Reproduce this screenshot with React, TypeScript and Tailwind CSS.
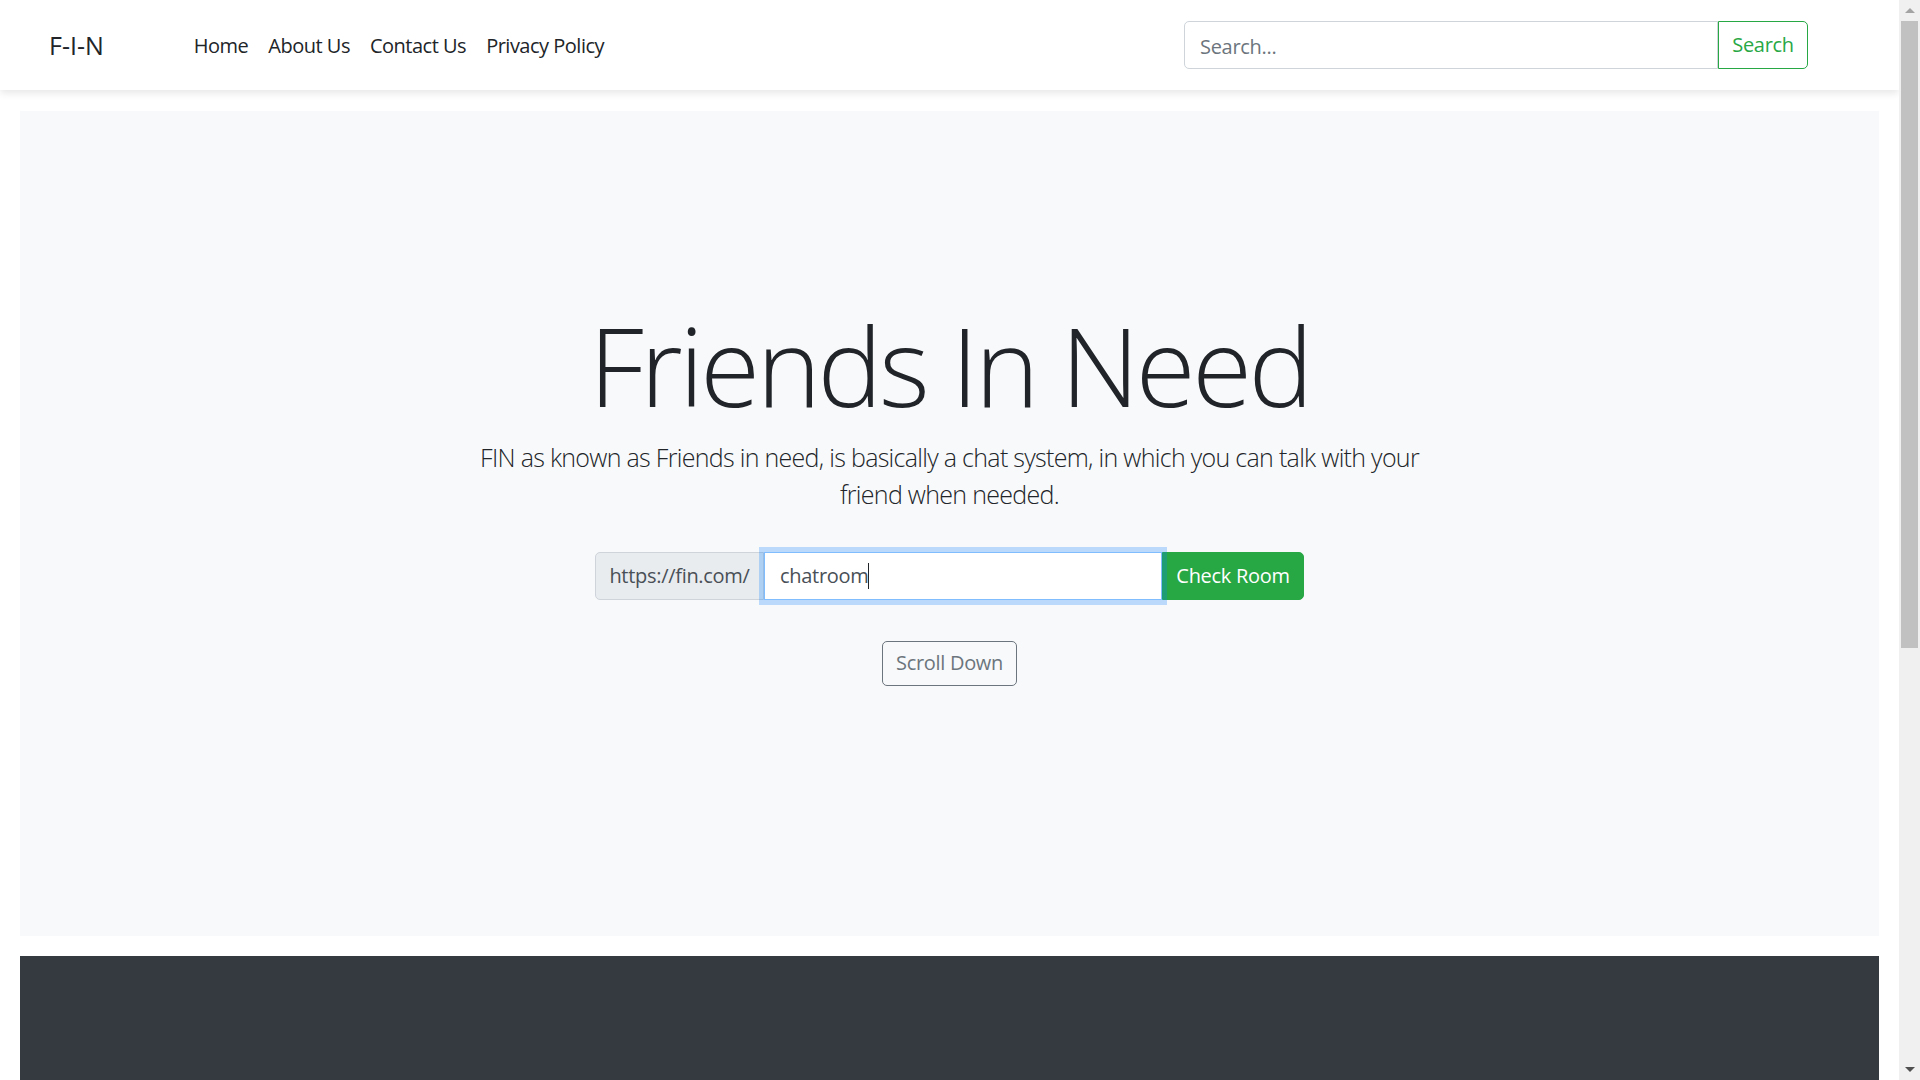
import React from "react";

const font = { fontFamily: '"Open Sans", "Noto Sans", sans-serif' };

const navLinks = ["Home", "About Us", "Contact Us", "Privacy Policy"];

const Navbar = () => (
  <nav className="relative z-10 h-[90px] flex items-center bg-white shadow-[0_3px_8px_rgba(0,0,0,0.1)] pl-[49px] pr-[91px]">
    <a className="text-[25px] text-[#212529] mr-[80px] pt-[2px]">F-I-N</a>
    <ul className="flex items-center pt-[2px]">
      {navLinks.map((l) => (
        <li key={l}>
          <a className="block px-[10px] text-[20px] tracking-[-0.5px] text-[#212529]">{l}</a>
        </li>
      ))}
    </ul>
    <form className="ml-auto flex h-[48px]">
      <input
        placeholder="Search..."
        className="w-[534px] h-full border border-[#ced4da] rounded-l-[5px] px-[15px] pt-[2px] text-[20px] tracking-[-0.3px] text-[#495057] placeholder:text-[#6c757d] outline-none bg-white"
      />
      <button
        type="button"
        className="w-[90px] h-full border border-[#28a745] rounded-r-[5px] text-[20px] tracking-[-0.3px] text-[#28a745] bg-white"
      >
        Search
      </button>
    </form>
  </nav>
);

const Hero = () => (
  <section className="mx-[20px] mt-[21px] h-[825px] bg-[#f8f9fa] flex flex-col items-center pt-[189px]">
    <h1 className="text-[109px] leading-[1.2] font-light text-[#212529] tracking-[-3.5px] mb-[8px]">
      Friends In Need
    </h1>
    <p className="text-[25px] leading-[1.5] font-light text-[#212529] text-center tracking-[-0.7px]">
      FIN as known as Friends in need, is basically a chat system, in which you can talk with your
      <br />
      friend when needed.
    </p>
    <div className="mt-[38px] flex h-[48px] text-[20px] tracking-[-0.3px]">
      <span className="w-[169px] flex items-center justify-center bg-[#e9ecef] border border-[#ced4da] rounded-l-[5px] text-[#495057]">
        https://fin.com/
      </span>
      <div className="w-[398px] h-full flex items-center bg-white border border-[#80bdff] px-[15px] text-[#495057] shadow-[0_0_0_5px_rgba(0,123,255,0.25)] relative z-10">
        chatroom
        <span className="inline-block w-px h-[26px] bg-[#212529]" />
      </div>
      <button
        type="button"
        className="w-[142px] bg-[#28a745] text-white rounded-r-[5px] border border-[#28a745]"
      >
        Check Room
      </button>
    </div>
    <button
      type="button"
      className="mt-[41px] w-[135px] h-[45px] border border-[#6c757d] rounded-[5px] text-[20px] tracking-[-0.3px] text-[#6c757d]"
    >
      Scroll Down
    </button>
  </section>
);

const Scrollbar = () => (
  <aside className="w-[21px] h-full bg-[#f0f0f0] flex flex-col items-center">
    <div className="h-[21px] flex items-center justify-center">
      <div className="w-0 h-0 border-l-[5px] border-r-[5px] border-b-[5px] border-l-transparent border-r-transparent border-b-[#a3a3a3]" />
    </div>
    <div className="w-[17px] h-[627px] bg-[#c1c1c1]" />
    <div className="flex-1" />
    <div className="h-[21px] flex items-center justify-center">
      <div className="w-0 h-0 border-l-[5px] border-r-[5px] border-t-[5px] border-l-transparent border-r-transparent border-t-[#505050]" />
    </div>
  </aside>
);

export default function App() {
  return (
    <div className="h-screen w-full flex overflow-hidden bg-white" style={font}>
      <main className="flex-1 h-full overflow-hidden">
        <Navbar />
        <Hero />
        <footer className="mx-[20px] mt-[20px] h-[400px] bg-[#343a40]" />
      </main>
      <Scrollbar />
    </div>
  );
}
